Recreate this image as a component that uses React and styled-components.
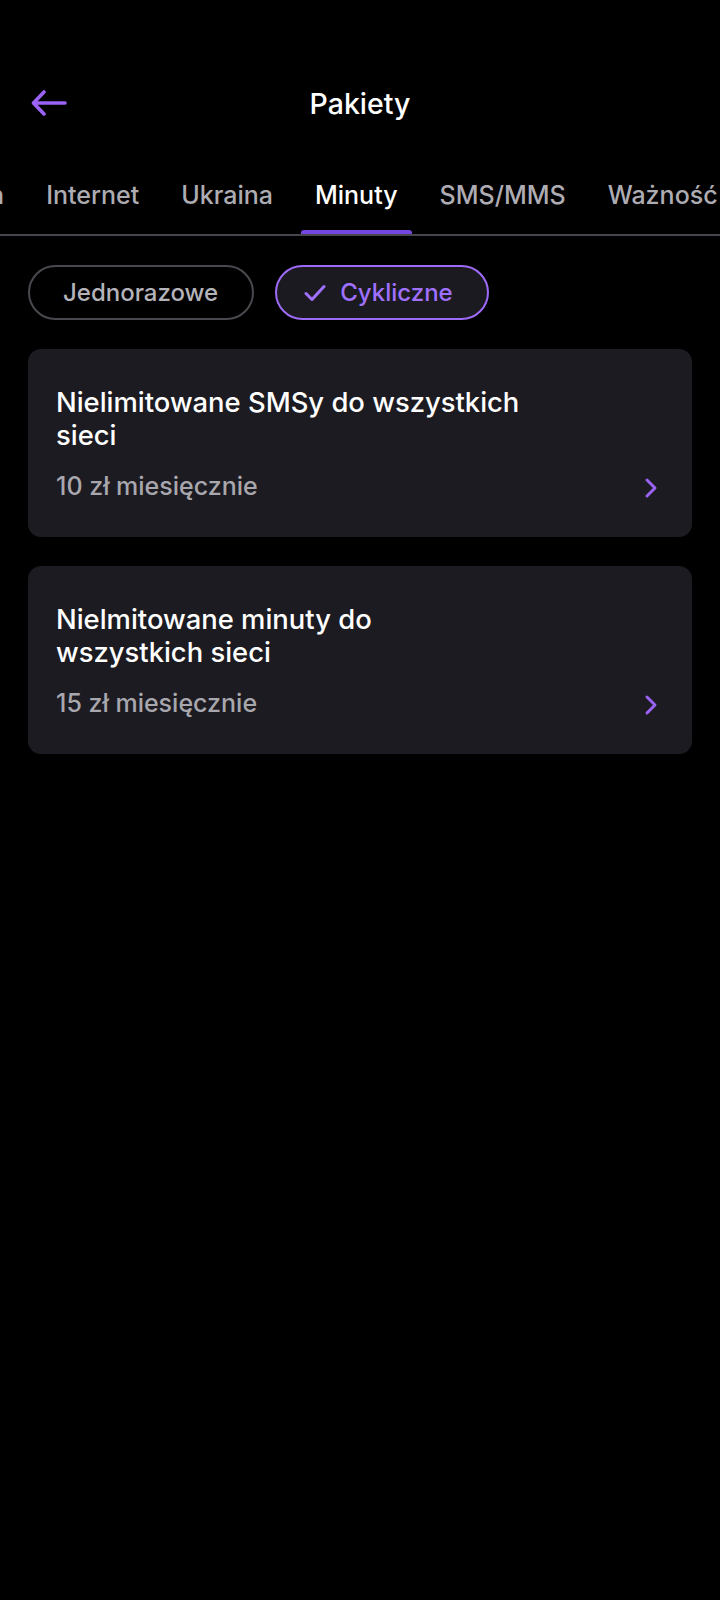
import React, { useLayoutEffect, useRef } from 'react'
import styled, { createGlobalStyle } from 'styled-components'

const GlobalStyle = createGlobalStyle`
    html, body {
        margin: 0;
        padding: 0;
        background: #000;
    }
    body {
        font-family: Inter, "Noto Sans", "Liberation Sans", sans-serif;
        -webkit-font-smoothing: antialiased;
    }
`

const Page = styled.div`
    min-height: 1600px;
    background: #000;
    color: #fff;
    padding-top: 60px;
    box-sizing: border-box;
    overflow: hidden;
`

const Header = styled.header`
    position: relative;
    height: 86px;
    display: flex;
    align-items: center;
    justify-content: center;
`

const BackButton = styled.button`
    position: absolute;
    left: 29px;
    top: 50%;
    transform: translateY(-50%);
    background: none;
    border: 0;
    padding: 2px;
    display: flex;
    cursor: pointer;
`

const Title = styled.h1`
    margin: 0;
    font-size: 28.5px;
    font-weight: 500;
    color: #fff;
`

const TabBar = styled.nav`
    margin-top: 10px;
    height: 78px;
    border-bottom: 2px solid #48464d;
    overflow-x: auto;
    overflow-y: hidden;
    scrollbar-width: none;
    &::-webkit-scrollbar {
        display: none;
    }
`

const TabRow = styled.div`
    display: flex;
    height: 100%;
    width: max-content;
    white-space: nowrap;
`

const Tab = styled.div`
    position: relative;
    display: flex;
    align-items: center;
    padding: 0 21px;
    font-size: 25px;
    font-weight: 500;
    color: ${p => (p.$active ? '#fff' : '#aeacb3')};

    &::after {
        content: '';
        display: ${p => (p.$active ? 'block' : 'none')};
        position: absolute;
        left: 7px;
        right: 7px;
        bottom: 0;
        height: 4px;
        border-radius: 3px 3px 0 0;
        background: #7446e0;
    }
`

const Chips = styled.div`
    display: flex;
    gap: 21px;
    padding: 0 28px;
    margin-top: 29px;
`

const Chip = styled.button`
    display: flex;
    align-items: center;
    gap: 14px;
    height: 55px;
    box-sizing: border-box;
    padding: 0 34px 0 ${p => (p.$active ? '27px' : '33px')};
    border-radius: 28px;
    border: 2px solid ${p => (p.$active ? '#9d6bf7' : '#4a484e')};
    background: ${p => (p.$active ? '#1c1a21' : 'transparent')};
    color: ${p => (p.$active ? '#a070ff' : '#b5b3ba')};
    font-family: inherit;
    font-size: 24px;
    font-weight: 500;
    cursor: pointer;
`

const CardList = styled.div`
    display: flex;
    flex-direction: column;
    gap: 29px;
    padding: 0 28px;
    margin-top: 29px;
`

const Card = styled.div`
    display: flex;
    align-items: flex-end;
    justify-content: space-between;
    background: #1c1b21;
    border-radius: 13px;
    padding: 37px 34px 35px 28px;
`

const CardBody = styled.div`
    display: flex;
    flex-direction: column;
    gap: 18px;
`

const CardTitle = styled.div`
    font-size: 27.4px;
    font-weight: 500;
    line-height: 33px;
    white-space: pre-line;
    color: #fff;
`

const Price = styled.div`
    font-size: 25px;
    line-height: 32px;
    font-weight: 500;
    color: #a9a7ae;
`

const Chevron = styled.div`
    display: flex;
    margin-bottom: 3px;
`

const tabs = ['Sezon', 'Internet', 'Ukraina', 'Minuty', 'SMS/MMS', 'Ważność']

const offers = [
    { title: 'Nielimitowane SMSy do wszystkich\nsieci', price: '10 zł miesięcznie' },
    { title: 'Nielmitowane minuty do\nwszystkich sieci', price: '15 zł miesięcznie' },
]

export default function App() {
    const barRef = useRef(null)
    const firstRef = useRef(null)

    // tab strip is scrolled so that "Internet" sits near the left edge
    useLayoutEffect(() => {
        if (barRef.current && firstRef.current) {
            barRef.current.scrollLeft = firstRef.current.offsetLeft - 25
        }
    }, [])

    return (
        <React.Fragment>
            <GlobalStyle/>
            <Page>
                <Header>
                    <BackButton aria-label="Wstecz">
                        <svg width="36" height="26" viewBox="0 0 36 26" fill="none">
                            <path d="M34 13H3M13 2L2.5 13L13 24" stroke="#9a63f5" strokeWidth="3.6" strokeLinecap="round" strokeLinejoin="round"/>
                        </svg>
                    </BackButton>
                    <Title>Pakiety</Title>
                </Header>

                <TabBar ref={barRef}>
                    <TabRow>
                        {tabs.map(t => (
                            <Tab key={t} ref={t === 'Internet' ? firstRef : null} $active={t === 'Minuty'}>{t}</Tab>
                        ))}
                    </TabRow>
                </TabBar>

                <Chips>
                    <Chip>Jednorazowe</Chip>
                    <Chip $active>
                        <svg width="22" height="18" viewBox="0 0 22 18" fill="none">
                            <path d="M2 9.5L8 15.5L20 2.5" stroke="#a070ff" strokeWidth="3" strokeLinecap="round" strokeLinejoin="round"/>
                        </svg>
                        Cykliczne
                    </Chip>
                </Chips>

                <CardList>
                    {offers.map(o => (
                        <Card key={o.price}>
                            <CardBody>
                                <CardTitle>{o.title}</CardTitle>
                                <Price>{o.price}</Price>
                            </CardBody>
                            <Chevron>
                                <svg width="14" height="22" viewBox="0 0 14 22" fill="none">
                                    <path d="M3 3L11 11L3 19" stroke="#9a63f5" strokeWidth="3" strokeLinecap="round" strokeLinejoin="round"/>
                                </svg>
                            </Chevron>
                        </Card>
                    ))}
                </CardList>
            </Page>
        </React.Fragment>
    )
}
